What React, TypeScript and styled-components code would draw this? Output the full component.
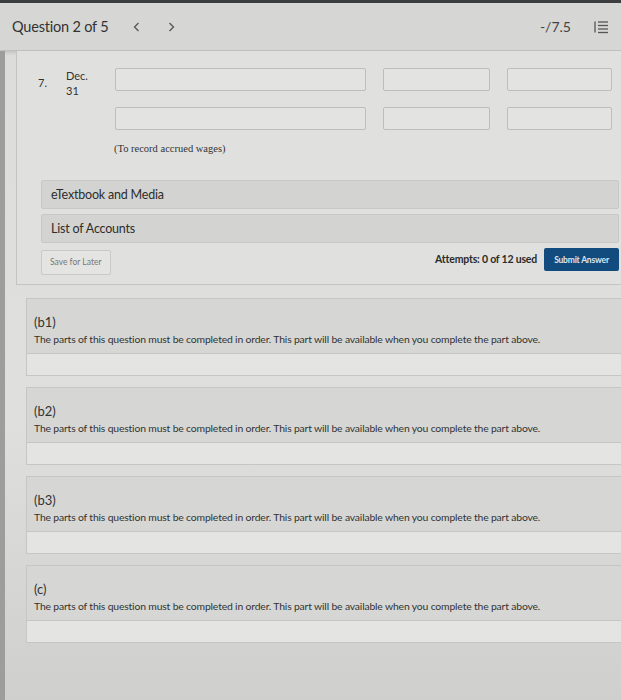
import React from "react";
import styled, { createGlobalStyle } from "styled-components";

const Global = createGlobalStyle`
  html, body { margin: 0; padding: 0; }
  body {
    background: #d9dad7;
    font-family: Lato, "Open Sans", "Liberation Sans", sans-serif;
    color: #2f2f2f;
    overflow: hidden;
  }
`;

const Page = styled.div`
  width: 621px;
  height: 700px;
  display: flex;
  flex-direction: column;
  background: linear-gradient(180deg, #dcddda 0%, #dfe0dd 60%, #cfd0cd 100%);
  overflow: hidden;
`;

const Header = styled.header`
  height: 47px;
  border-top: 3px solid #3b3d3f;
  background: #d6d7d4;
  border-bottom: 1px solid #bfc0bd;
  box-shadow: 0 2px 3px rgba(0, 0, 0, 0.12);
  display: flex;
  align-items: center;
  padding: 0 12px;
  flex-shrink: 0;
`;

const Title = styled.span`
  font-size: 14.5px;
  color: #333;
  letter-spacing: -0.2px;
`;

const NavBtn = styled.span<{ $ml: number }>`
  display: flex;
  align-items: center;
  margin-left: ${(p) => p.$ml}px;
`;

const Spacer = styled.div`
  flex: 1;
`;

const Score = styled.span`
  font-size: 14px;
  color: #444;
  margin-right: 22px;
`;

const Body = styled.div`
  flex: 1;
  display: flex;
  border-left: 5px solid #9d9e9c;
`;

const Column = styled.div`
  flex: 1;
  min-width: 0;
  padding-left: 11px;
  display: flex;
  flex-direction: column;
`;

const QuestionPanel = styled.section`
  border-left: 1px solid #c4c5c2;
  border-bottom: 1px solid #c4c5c2;
  background: #e0e1de;
  padding: 17px 2px 8px 21px;
  display: flex;
  flex-direction: column;
`;

const Entry = styled.div`
  display: flex;
  align-items: flex-start;
`;

const Num = styled.div`
  width: 28px;
  flex-shrink: 0;
  font-size: 11px;
  padding-top: 8px;
  color: #333;
`;

const DateCell = styled.div`
  width: 49px;
  flex-shrink: 0;
  font-size: 11px;
  line-height: 15px;
  color: #333;
`;

const Fields = styled.div`
  display: grid;
  grid-template-columns: 251px 107px 105px;
  column-gap: 17px;
  row-gap: 16px;
`;

const Field = styled.div`
  height: 21px;
  border: 1px solid #bdbebb;
  border-radius: 2px;
  background: #e3e4e1;
`;

const Note = styled.div`
  font-family: "Liberation Serif", "Times New Roman", serif;
  font-size: 10.5px;
  color: #333;
  margin: 13px 0 0 76px;
`;

const LinkBox = styled.div<{ $mt: number }>`
  margin-top: ${(p) => p.$mt}px;
  height: 27px;
  margin-left: 3px;
  background: #d3d4d1;
  border: 1px solid #c8c9c6;
  border-radius: 2px;
  display: flex;
  align-items: center;
  padding-left: 9px;
  font-size: 12.5px;
  color: #2d2d2d;
  letter-spacing: -0.2px;
`;

const Actions = styled.div`
  margin-top: 5px;
  display: flex;
  align-items: center;
  margin-left: 3px;
`;

const SaveBtn = styled.button`
  height: 25px;
  padding: 0 8px;
  border: 1px solid #c9cac7;
  border-radius: 2px;
  background: #e4e5e2;
  font-family: inherit;
  font-size: 8.5px;
  color: #777;
`;

const Attempts = styled.span`
  font-size: 10.5px;
  font-weight: 700;
  color: #2b2b2b;
  margin-right: 7px;
  margin-bottom: 6px;
  letter-spacing: -0.2px;
`;

const SubmitBtn = styled.button`
  height: 23px;
  width: 75px;
  flex-shrink: 0;
  padding: 0;
  border: none;
  border-radius: 2px;
  background: #124b7e;
  color: #dfe6ee;
  font-family: inherit;
  font-size: 8.5px;
  font-weight: 700;
  margin-bottom: 5px;
  letter-spacing: -0.2px;
  white-space: nowrap;
`;

const PartList = styled.div`
  display: flex;
  flex-direction: column;
  gap: 11px;
  padding: 13px 0 0 10px;
`;

const Part = styled.section`
  border: 1px solid #c6c7c4;
  border-right: none;
  display: flex;
  flex-direction: column;
`;

const PartHead = styled.div`
  background: #d6d7d4;
  border-bottom: 1px solid #c6c7c4;
  padding: 15px 10px 8px 7px;
`;

const PartLabel = styled.div`
  font-size: 13px;
  color: #333;
  margin-bottom: 3px;
`;

const PartText = styled.div`
  font-size: 10.4px;
  color: #333;
  letter-spacing: -0.17px;
  white-space: nowrap;
`;

const PartFoot = styled.div`
  height: 21px;
  background: #e4e5e2;
`;

const Chevron = ({ dir }: { dir: "l" | "r" }) => (
  <svg width="7" height="10" viewBox="0 0 7 10" fill="none" stroke="#555" strokeWidth="1.3">
    {dir === "l" ? <polyline points="5.5,1 1.5,5 5.5,9" /> : <polyline points="1.5,1 5.5,5 1.5,9" />}
  </svg>
);

const ListIcon = () => (
  <svg width="16" height="14" viewBox="0 0 16 14" fill="none" stroke="#555" strokeWidth="1.3">
    <line x1="2" y1="1.5" x2="2" y2="12.5" />
    <line x1="5" y1="2" x2="15" y2="2" />
    <line x1="5" y1="5.5" x2="15" y2="5.5" />
    <line x1="5" y1="9" x2="15" y2="9" />
    <line x1="5" y1="12.5" x2="15" y2="12.5" />
  </svg>
);

const parts = ["(b1)", "(b2)", "(b3)", "(c)"];
const msg =
  "The parts of this question must be completed in order. This part will be available when you complete the part above.";

export default function App() {
  return (
    <>
      <Global />
      <Page>
        <Header>
          <Title>Question 2 of 5</Title>
          <NavBtn $ml={25}>
            <Chevron dir="l" />
          </NavBtn>
          <NavBtn $ml={28}>
            <Chevron dir="r" />
          </NavBtn>
          <Spacer />
          <Score>-/7.5</Score>
          <ListIcon />
        </Header>
        <Body>
          <Column>
            <QuestionPanel>
              <Entry>
                <Num>7.</Num>
                <DateCell>
                  Dec.
                  <br />
                  31
                </DateCell>
                <Fields>
                  <Field />
                  <Field />
                  <Field />
                  <Field />
                  <Field />
                  <Field />
                </Fields>
              </Entry>
              <Note>(To record accrued wages)</Note>
              <LinkBox $mt={26}>eTextbook and Media</LinkBox>
              <LinkBox $mt={5}>List of Accounts</LinkBox>
              <Actions>
                <SaveBtn>Save for Later</SaveBtn>
                <Spacer />
                <Attempts>Attempts: 0 of 12 used</Attempts>
                <SubmitBtn>Submit Answer</SubmitBtn>
              </Actions>
            </QuestionPanel>
            <PartList>
              {parts.map((p) => (
                <Part key={p}>
                  <PartHead>
                    <PartLabel>{p}</PartLabel>
                    <PartText>{msg}</PartText>
                  </PartHead>
                  <PartFoot />
                </Part>
              ))}
            </PartList>
          </Column>
        </Body>
      </Page>
    </>
  );
}
